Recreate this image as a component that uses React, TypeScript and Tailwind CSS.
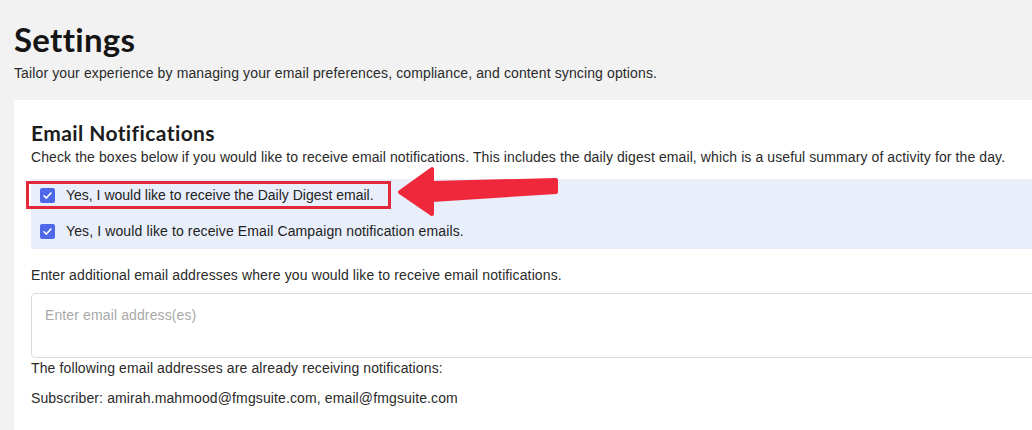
import React from "react";

function CheckBox() {
  return (
    <span className="flex h-[15px] w-[15px] shrink-0 items-center justify-center rounded-[2px] bg-[#4f68e8]">
      <svg width="11" height="11" viewBox="0 0 12 12" fill="none">
        <path d="M2.2 6.3 L4.8 8.8 L9.8 3.3" stroke="#fff" strokeWidth="1.8" strokeLinecap="round" strokeLinejoin="round" />
      </svg>
    </span>
  );
}

const heading = { fontFamily: 'Lato, "Liberation Sans", Arial, sans-serif' };

export default function App() {
  return (
    <div
      className="h-[430px] w-[1032px] overflow-hidden bg-[#f2f2f2] pl-[14px] pt-[19px] tracking-[0.12px] text-[#262626]"
      style={{ fontFamily: '"Liberation Sans", Arial, sans-serif' }}
    >
      <h1 className="text-[33px] leading-[40px] font-bold tracking-[0.3px] text-[#151515]" style={heading}>
        Settings
      </h1>
      <p className="mt-[4px] text-[14px] leading-[20px] text-[#2a2a2a]">
        Tailor your experience by managing your email preferences, compliance, and content syncing options.
      </p>

      <div className="mt-[17px] flex min-h-[400px] flex-col bg-white pl-[17px] pt-[19px]">
        <h2 className="text-[21px] leading-[28px] font-bold tracking-[0.4px] text-[#1c1c1c]" style={heading}>
          Email Notifications
        </h2>
        <p className="text-[14px] leading-[20px] tracking-[0.1px] text-[#2a2a2a]">
          Check the boxes below if you would like to receive email notifications. This includes the daily digest email, which is a useful summary of activity for the day.
        </p>

        <div className="mt-[12px] flex h-[70px] flex-col bg-[#e9eefb]">
          <div className="relative flex h-[32px] items-center gap-[11px] pl-[9px]">
            <CheckBox />
            <span className="text-[14px] leading-[20px] tracking-normal text-[#222]">Yes, I would like to receive the Daily Digest email.</span>
            <div className="pointer-events-none absolute left-[-5px] top-[2px] h-[28px] w-[365px] border-[3px] border-[#e3283b]" />
            <svg
              className="pointer-events-none absolute left-[364px] top-[-15px]"
              width="165"
              height="55"
              viewBox="0 0 165 55"
            >
              <polygon
                points="5,28 37,5 37,19 161,16 161,28 37,36 37,50"
                fill="#f0283c"
                stroke="#f0283c"
                strokeWidth="4"
                strokeLinejoin="round"
              />
            </svg>
          </div>
          <div className="mt-[4px] flex h-[32px] items-center gap-[11px] pl-[9px]">
            <CheckBox />
            <span className="text-[14px] leading-[20px] text-[#222]">Yes, I would like to receive Email Campaign notification emails.</span>
          </div>
        </div>

        <p className="mt-[16px] text-[14px] leading-[20px] text-[#2a2a2a]">
          Enter additional email addresses where you would like to receive email notifications.
        </p>

        <textarea
          className="mt-[8px] h-[65px] w-[1100px] shrink-0 resize-none rounded-[4px] border border-[#d9d9d9] bg-white pl-[13px] pt-[11px] text-[14px] leading-[20px] outline-none placeholder:text-[#a9a9a9]"
          placeholder="Enter email address(es)"
          style={{ fontFamily: '"Liberation Sans", Arial, sans-serif' }}
        />

        <p className="text-[14px] leading-[20px] text-[#2a2a2a]">
          The following email addresses are already receiving notifications:
        </p>
        <p className="mt-[10px] text-[14px] leading-[20px] text-[#2a2a2a]">
          Subscriber: amirah.mahmood@fmgsuite.com, email@fmgsuite.com
        </p>
      </div>
    </div>
  );
}
